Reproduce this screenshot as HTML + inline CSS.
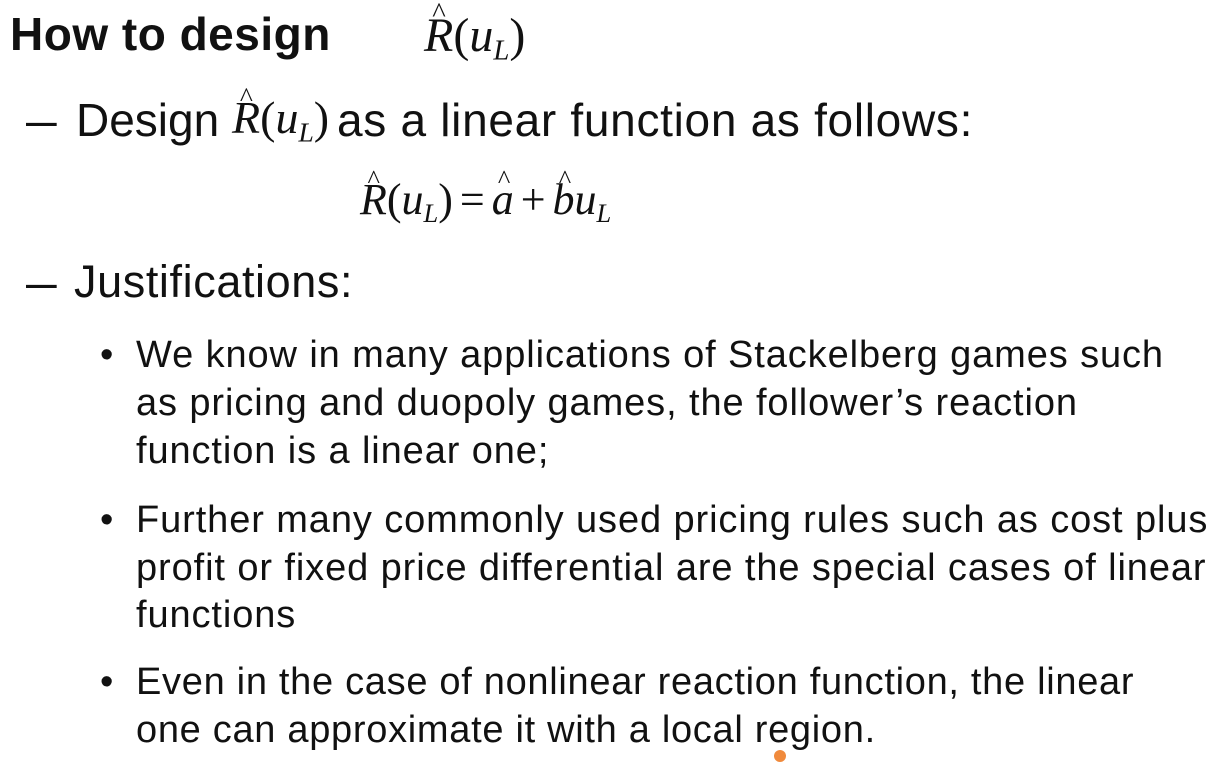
<!DOCTYPE html>
<html><head><style>
body{margin:0;width:1219px;height:757px;background:#fff;position:relative;overflow:hidden;font-family:"Liberation Sans",sans-serif;color:#111}
.a{position:absolute;white-space:nowrap;line-height:1}
.m{font-family:"Liberation Serif",serif;font-style:italic}
.hat{position:relative;display:inline-block}
.hat:before{content:"^";position:absolute;left:28%;top:-0.45em;font-style:normal;font-size:0.6em}
sub{font-size:0.6em;vertical-align:-0.3em}
.b{font-size:38px;letter-spacing:0.9px}
.op{font-style:normal;margin:0 7px}
</style></head><body>
<div class="a" style="left:10px;top:11px;font-size:46px;font-weight:bold;letter-spacing:0.5px">How to design</div>
<div class="a m" style="left:424px;top:12px;font-size:48px"><span class="hat">R</span><span style="font-style:normal">(</span>u<sub>L</sub><span style="font-style:normal">)</span></div>
<div class="a" style="left:26px;top:97px;font-size:46px;transform:scaleX(1.2);transform-origin:left">–</div>
<div class="a" style="left:76px;top:97px;font-size:46px">Design</div>
<div class="a m" style="left:232px;top:95px;font-size:46px"><span class="hat">R</span><span style="font-style:normal">(</span>u<sub>L</sub><span style="font-style:normal">)</span></div>
<div class="a" style="left:337px;top:97px;font-size:46px;letter-spacing:0.7px">as a linear function as follows:</div>
<div class="a m" style="left:360px;top:178px;font-size:44px"><span class="hat">R</span><span style="font-style:normal">(</span>u<sub>L</sub><span style="font-style:normal">)</span><span class="op">=</span><span class="hat">a</span><span class="op">+</span><span class="hat">b</span>u<sub>L</sub></div>
<div class="a" style="left:26px;top:259px;font-size:46px;transform:scaleX(1.2);transform-origin:left">–</div>
<div class="a" style="left:74px;top:259px;font-size:45px;letter-spacing:0.6px">Justifications:</div>
<div class="a b" style="left:100px;top:336px">•</div>
<div class="a b" style="left:136px;top:336px">We know in many applications of Stackelberg games such</div>
<div class="a b" style="left:136px;top:384px">as pricing and duopoly games, the follower’s reaction</div>
<div class="a b" style="left:136px;top:432px">function is a linear one;</div>
<div class="a b" style="left:100px;top:501px">•</div>
<div class="a b" style="left:136px;top:501px">Further many commonly used pricing rules such as cost plus</div>
<div class="a b" style="left:136px;top:549px">profit or fixed price differential are the special cases of linear</div>
<div class="a b" style="left:136px;top:596px">functions</div>
<div class="a b" style="left:100px;top:663px">•</div>
<div class="a b" style="left:136px;top:663px;letter-spacing:0.7px">Even in the case of nonlinear reaction function, the linear</div>
<div class="a b" style="left:136px;top:711px;letter-spacing:0.7px">one can approximate it with a local region.</div>
<div style="position:absolute;left:774px;top:750px;width:12px;height:12px;border-radius:50%;background:#f08a3c"></div>
</body></html>
